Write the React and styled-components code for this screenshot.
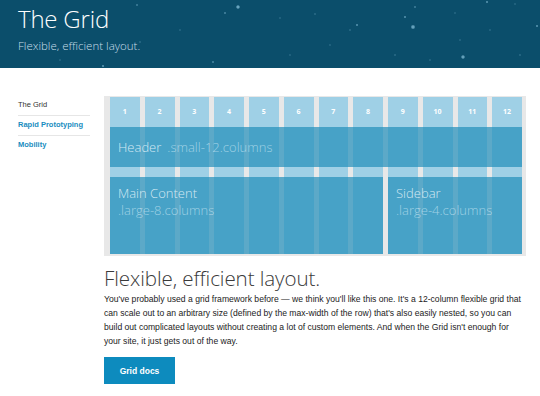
import styled, { createGlobalStyle } from "styled-components";

const GlobalStyle = createGlobalStyle`
  html, body { margin: 0; padding: 0; background: #fff; }
  body { font-family: "Liberation Sans", Arial, sans-serif; }
`;

// stars in the banner: [x, y, radius, alpha]
const stars = [
  [238, 7, 2.2, 0.8], [413, 27, 2.4, 0.75], [463, 57, 2.2, 0.75], [487, 2, 1.4, 0.6],
  [357, 25, 1.3, 0.6], [405, 17, 1.3, 0.6], [415, 7, 1.1, 0.5], [537, 26, 1.4, 0.6],
  [103, 66, 1.5, 0.6], [137, 5, 1.1, 0.5], [213, 62, 1.2, 0.5], [225, 13, 1.2, 0.5],
  [140, 42, 1, 0.35], [315, 14, 1, 0.35], [350, 30, 1, 0.35], [330, 45, 1, 0.3],
  [430, 60, 1, 0.3], [460, 40, 1, 0.3], [490, 30, 1, 0.3], [520, 55, 1, 0.35],
  [30, 20, 1, 0.3], [60, 60, 1, 0.3], [180, 30, 1, 0.3], [290, 55, 1, 0.3],
  [395, 55, 1, 0.35], [455, 13, 1, 0.3], [515, 4, 1, 0.3], [280, 18, 1, 0.3],
];

const starBg = stars
  .map(
    ([x, y, r, a]) =>
      `radial-gradient(circle at ${x}px ${y}px, rgba(160,215,240,${a}) 0, rgba(160,215,240,${a * 0.6}) ${r * 0.6}px, rgba(160,215,240,0) ${r}px)`
  )
  .join(", ");

const Banner = styled.header`
  height: 68px;
  box-sizing: border-box;
  padding: 3px 18px 0;
  background-color: #0b4e6b;
  background-image: ${starBg};
  font-family: "Open Sans", sans-serif;
  font-weight: 300;
  color: #fff;
`;

const Title = styled.h1`
  margin: 0;
  font-size: 24px;
  font-weight: 300;
  line-height: 32px;
  letter-spacing: -0.2px;
`;

const Subtitle = styled.p`
  margin: 4px 0 0;
  font-size: 11.5px;
  line-height: 14px;
  color: #c6dde8;
`;

const Body = styled.div`
  display: flex;
  gap: 14px;
  padding: 28px 14px 0 18px;
`;

const SideNav = styled.nav`
  width: 72px;
  flex: none;
`;

const NavItem = styled.a`
  display: block;
  font-size: 7.5px;
  line-height: 10px;
  padding: 4px 0 5px;
  color: ${(p) => (p.$active ? "#333" : "#1a8dc0")};
  font-weight: ${(p) => (p.$active ? "normal" : "bold")};
  border-bottom: ${(p) => (p.$last ? "none" : "1px solid #e6e6e6")};
  text-decoration: none;
`;

const Main = styled.main`
  flex: 1;
  min-width: 0;
`;

const Showcase = styled.div`
  background: #e8e8e8;
  padding: 1px 4px 2px 6px;
`;

const Columns = styled.div`
  display: grid;
  grid-template-columns: repeat(12, 1fr);
  grid-template-rows: 30px 40px 10px 77px;
  column-gap: 5px;
`;

const Col = styled.div`
  grid-column: ${(p) => p.$n};
  grid-row: 1 / -1;
  background: #9fd0e6;
  color: #fff;
  font-family: "Open Sans", sans-serif;
  font-weight: 700;
  font-size: 7px;
  line-height: 30px;
  text-align: center;
`;

const Block = styled.div`
  grid-column: ${(p) => p.$cols};
  grid-row: ${(p) => p.$row};
  background: rgba(38, 144, 187, 0.72);
  display: flex;
  flex-direction: ${(p) => (p.$stack ? "column" : "row")};
  align-items: ${(p) => (p.$stack ? "flex-start" : "center")};
  gap: ${(p) => (p.$stack ? "0" : "6px")};
  padding: ${(p) => (p.$stack ? "8px 8px" : "0 8px")};
  font-family: "Open Sans", sans-serif;
  font-weight: 300;
  font-size: 13px;
  line-height: 17px;
  color: rgba(235, 247, 252, 0.85);
`;

const Klass = styled.span`
  color: rgba(220, 240, 250, 0.6);
`;

const Heading = styled.h2`
  margin: 9px 0 0;
  font-family: "Open Sans", sans-serif;
  font-weight: 300;
  font-size: 20.6px;
  line-height: 27px;
  color: #3a3a3a;
  letter-spacing: -0.1px;
`;

const Text = styled.p`
  margin: 0;
  font-size: 8.6px;
  line-height: 14px;
  color: #222;
`;

const Button = styled.a`
  display: inline-flex;
  align-items: center;
  justify-content: center;
  width: 71px;
  height: 27px;
  margin-top: 9px;
  background: #0d8bbe;
  color: #fff;
  font-size: 8.5px;
  font-weight: bold;
  text-decoration: none;
`;

const App = () => {
  const cols = Array.from({ length: 12 }, (_, i) => i + 1);
  return (
    <>
      <GlobalStyle />
      <Banner>
        <Title>The Grid</Title>
        <Subtitle>Flexible, efficient layout.</Subtitle>
      </Banner>
      <Body>
        <SideNav>
          <NavItem $active>The Grid</NavItem>
          <NavItem href="#">Rapid Prototyping</NavItem>
          <NavItem href="#" $last>Mobility</NavItem>
        </SideNav>
        <Main>
          <Showcase>
            <Columns>
              {cols.map((n) => (
                <Col key={n} $n={n}>{n}</Col>
              ))}
              <Block $cols="1 / -1" $row={2}>
                Header <Klass>.small-12.columns</Klass>
              </Block>
              <Block $cols="1 / 9" $row={4} $stack>
                Main Content
                <Klass>.large-8.columns</Klass>
              </Block>
              <Block $cols="9 / -1" $row={4} $stack>
                Sidebar
                <Klass>.large-4.columns</Klass>
              </Block>
            </Columns>
          </Showcase>
          <Heading>Flexible, efficient layout.</Heading>
          <Text>
            You've probably used a grid framework before — we think you'll like this one. It's a
            12-column flexible grid that can scale out to an arbitrary size (defined by the
            max-width of the row) that's also easily nested, so you can build out complicated
            layouts without creating a lot of custom elements. And when the Grid isn't enough for
            your site, it just gets out of the way.
          </Text>
          <Button href="#">Grid docs</Button>
        </Main>
      </Body>
    </>
  );
};

export default App;
